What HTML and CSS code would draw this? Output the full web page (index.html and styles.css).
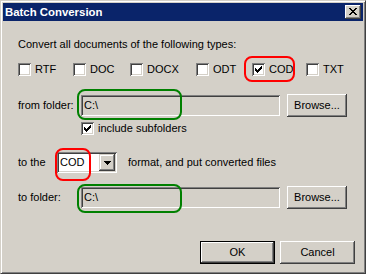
FILE: index.html
```html
<!DOCTYPE html>
<html lang="en">
<head>
    <meta charset="UTF-8">
    <title>Batch Conversion</title>
    <link rel="stylesheet" href="styles.css">
</head>
<body>
    <div class="window">
        <div class="titlebar">
            <span class="title">Batch Conversion</span>
            <div class="close-btn">
                <svg width="8" height="7" viewBox="0 0 8 7" shape-rendering="crispEdges">
                    <rect x="0" y="0" width="2" height="1"/><rect x="6" y="0" width="2" height="1"/>
                    <rect x="1" y="1" width="2" height="1"/><rect x="5" y="1" width="2" height="1"/>
                    <rect x="2" y="2" width="4" height="1"/>
                    <rect x="3" y="3" width="2" height="1"/>
                    <rect x="2" y="4" width="4" height="1"/>
                    <rect x="1" y="5" width="2" height="1"/><rect x="5" y="5" width="2" height="1"/>
                    <rect x="0" y="6" width="2" height="1"/><rect x="6" y="6" width="2" height="1"/>
                </svg>
            </div>
        </div>

        <div class="content">
            <div class="intro">Convert all documents of the following types:</div>

            <div class="types">
                <label class="check"><span class="box"></span>RTF</label>
                <label class="check"><span class="box"></span>DOC</label>
                <label class="check"><span class="box"></span>DOCX</label>
                <label class="check"><span class="box"></span>ODT</label>
                <label class="check">
                    <span class="box">
                        <svg class="tick" width="7" height="7" viewBox="0 0 7 7" shape-rendering="crispEdges"><path d="M6 0h1v3h-1zM5 1h1v3h-1zM4 2h1v3h-1zM3 3h1v3h-1zM2 4h1v3h-1zM1 3h1v3h-1zM0 2h1v3h-1z"/></svg>
                    </span>COD
                </label>
                <label class="check"><span class="box"></span>TXT</label>
            </div>

            <div class="folder-row first">
                <span class="label">from folder:</span>
                <div class="edit">C:\</div>
                <div class="btn browse">Browse...</div>
            </div>

            <div class="subfolders">
                <label class="check">
                    <span class="box">
                        <svg class="tick" width="7" height="7" viewBox="0 0 7 7" shape-rendering="crispEdges"><path d="M6 0h1v3h-1zM5 1h1v3h-1zM4 2h1v3h-1zM3 3h1v3h-1zM2 4h1v3h-1zM1 3h1v3h-1zM0 2h1v3h-1z"/></svg>
                    </span>include subfolders
                </label>
            </div>

            <div class="format-row">
                <span class="label-short">to the</span>
                <div class="combo">
                    <span class="combo-text">COD</span>
                    <div class="combo-drop">
                        <svg width="7" height="4" viewBox="0 0 7 4" shape-rendering="crispEdges">
                            <rect x="0" y="0" width="7" height="1"/>
                            <rect x="1" y="1" width="5" height="1"/>
                            <rect x="2" y="2" width="3" height="1"/>
                            <rect x="3" y="3" width="1" height="1"/>
                        </svg>
                    </div>
                </div>
                <span class="format-text">format, and put converted files</span>
            </div>

            <div class="folder-row second">
                <span class="label">to folder:</span>
                <div class="edit">C:\</div>
                <div class="btn browse">Browse...</div>
            </div>

            <div class="actions">
                <div class="btn default">OK</div>
                <div class="btn">Cancel</div>
            </div>
        </div>

        <!-- annotation marks drawn over the dialog -->
        <div class="mark red mark-cod"></div>
        <div class="mark red mark-combo"></div>
        <div class="mark green mark-from"></div>
        <div class="mark green mark-to"></div>
    </div>
</body>
</html>
```

FILE: styles.css
```css
body {
    margin: 0;
    font-family: "Liberation Sans", Arial, sans-serif;
    font-size: 11px;
    color: #000;
    background: #d4d0c8;
}
.window {
    position: relative;
    width: 366px;
    height: 274px;
    box-sizing: border-box;
    background: #d4d0c8;
    border: 1px solid;
    border-color: #d4d0c8 #404040 #404040 #d4d0c8;
    box-shadow: inset 1px 1px #fff, inset -1px -1px #808080;
    padding: 2px;
}
.titlebar {
    height: 18px;
    background: #0a246a;
    display: flex;
    align-items: center;
    justify-content: space-between;
    padding: 0 2px;
}
.title {
    color: #fff;
    font-weight: bold;
    font-size: 11.4px;
}
.close-btn {
    width: 16px;
    height: 14px;
    box-sizing: border-box;
    background: #d4d0c8;
    box-shadow: inset -1px -1px #404040, inset 1px 1px #fff, inset -2px -2px #808080;
    display: flex;
    align-items: center;
    justify-content: center;
    padding-bottom: 1px;
}
.content {
    padding: 0 8px 0 15px;
    line-height: 13px;
}
.intro {
    margin-top: 17px;
}
.types {
    margin-top: 12px;
    display: grid;
    grid-template-columns: 55px 57px 66px 56px 54px auto;
}
.check {
    display: flex;
    align-items: center;
    gap: 4px;
    height: 13px;
}
.box {
    width: 13px;
    height: 13px;
    box-sizing: border-box;
    padding: 3px;
    background: #fff;
    box-shadow: inset 1px 1px #808080, inset -1px -1px #fff, inset 2px 2px #404040, inset -2px -2px #d4d0c8;
}
.tick {
    display: block;
}
.folder-row {
    display: flex;
    align-items: center;
    height: 23px;
}
.folder-row.first {
    margin-top: 18px;
}
.folder-row.second {
    margin-top: 13px;
}
.label {
    width: 63px;
}
.edit {
    width: 199px;
    height: 21px;
    box-sizing: border-box;
    padding: 0 3px;
    display: flex;
    align-items: center;
    background: #d4d0c8;
    box-shadow: inset 1px 1px #808080, inset -1px -1px #fff, inset 2px 2px #404040, inset -2px -2px #d4d0c8;
}
.btn {
    width: 75px;
    height: 23px;
    box-sizing: border-box;
    display: flex;
    align-items: center;
    justify-content: center;
    background: #d4d0c8;
    box-shadow: inset -1px -1px #404040, inset 1px 1px #fff, inset -2px -2px #808080;
}
.btn.browse {
    width: 60px;
    margin-left: 7px;
}
.btn.default {
    border: 1px solid #000;
}
.subfolders {
    margin-top: 5px;
    margin-left: 63px;
}
.format-row {
    margin-top: 17px;
    display: flex;
    align-items: center;
    height: 21px;
}
.label-short {
    width: 39px;
}
.combo {
    width: 60px;
    height: 21px;
    box-sizing: border-box;
    padding: 2px;
    display: flex;
    background: #fff;
    box-shadow: inset 1px 1px #808080, inset -1px -1px #fff, inset 2px 2px #404040, inset -2px -2px #d4d0c8;
}
.combo-text {
    flex: 1;
    padding-left: 1px;
    display: flex;
    align-items: center;
}
.combo-drop {
    width: 16px;
    height: 17px;
    box-sizing: border-box;
    display: flex;
    align-items: center;
    justify-content: center;
    background: #d4d0c8;
    box-shadow: inset -1px -1px #404040, inset 1px 1px #d4d0c8, inset -2px -2px #808080, inset 2px 2px #fff;
}
.format-text {
    margin-left: 11px;
}
.actions {
    margin-top: 32px;
    display: flex;
    justify-content: flex-end;
    gap: 5px;
}
.mark {
    position: absolute;
    box-sizing: border-box;
    border: 2px solid;
    border-radius: 8px;
}
.red {
    border-color: #ff0000;
}
.green {
    border-color: #008000;
}
.mark-cod {
    left: 243px;
    top: 55px;
    width: 51px;
    height: 26px;
}
.mark-combo {
    left: 54px;
    top: 147px;
    width: 36px;
    height: 33px;
}
.mark-from {
    left: 76px;
    top: 88px;
    width: 105px;
    height: 31px;
}
.mark-to {
    left: 76px;
    top: 183px;
    width: 105px;
    height: 29px;
}
```
